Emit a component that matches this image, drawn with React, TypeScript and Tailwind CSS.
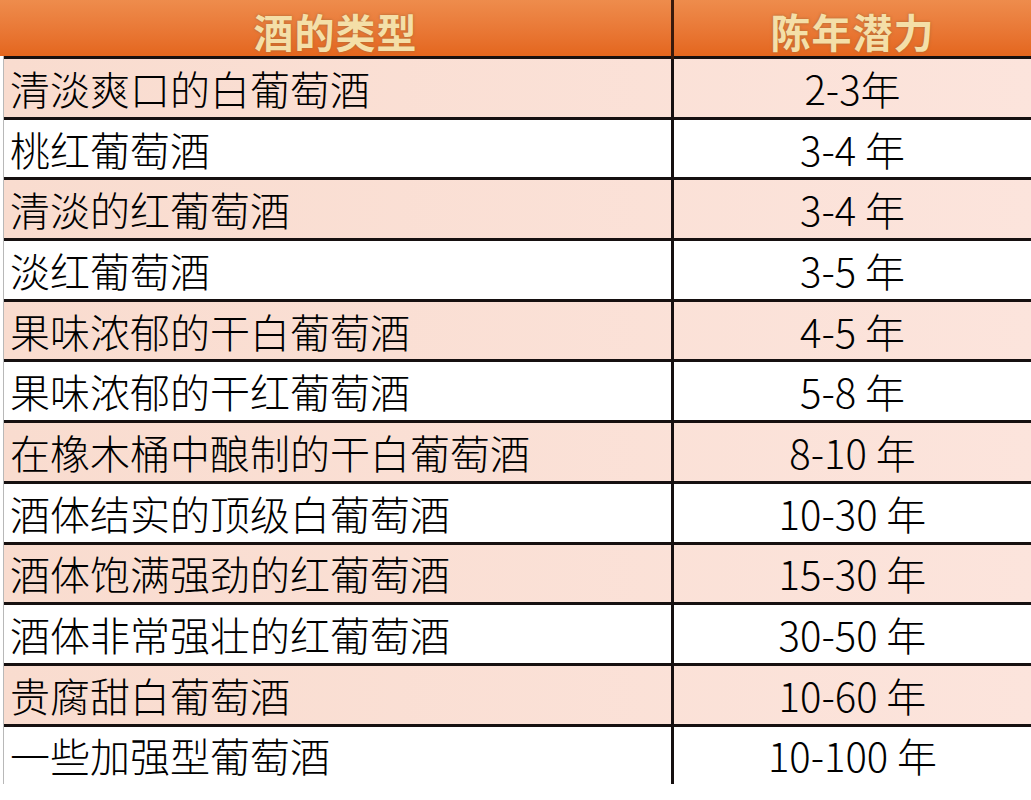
import React from "react";

const rows: [string, string][] = [
    ["清淡爽口的白葡萄酒", "2-3年"],
    ["桃红葡萄酒", "3-4 年"],
    ["清淡的红葡萄酒", "3-4 年"],
    ["淡红葡萄酒", "3-5 年"],
    ["果味浓郁的干白葡萄酒", "4-5 年"],
    ["果味浓郁的干红葡萄酒", "5-8 年"],
    ["在橡木桶中酿制的干白葡萄酒", "8-10 年"],
    ["酒体结实的顶级白葡萄酒", "10-30 年"],
    ["酒体饱满强劲的红葡萄酒", "15-30 年"],
    ["酒体非常强壮的红葡萄酒", "30-50 年"],
    ["贵腐甜白葡萄酒", "10-60 年"],
    ["一些加强型葡萄酒", "10-100 年"],
];

const font = { fontFamily: '"Noto Sans CJK SC", "Liberation Sans", sans-serif' };

export default function App() {
    return (
        <div className="w-[1031px] h-[800px] bg-white overflow-hidden text-black" style={font}>
            {/* header */}
            <div className="grid grid-cols-[671px_1fr] h-[56px] bg-gradient-to-b from-[#ee8c4c] to-[#e4661d]">
                <div className="flex items-center justify-center text-[40px] font-bold text-[#f4dfa8] [text-shadow:0_0_3px_#a86a36] tracking-[1px] pt-[1px]">
                    酒的类型
                </div>
                <div className="flex items-center justify-center border-l-[3px] border-[#3a1a0c] text-[40px] font-bold text-[#f4dfa8] [text-shadow:0_0_3px_#a86a36] tracking-[1px] pt-[1px]">
                    陈年潜力
                </div>
            </div>

            {/* body */}
            <div className="ml-[3px] border-l border-[#b8b8b8]">
                {rows.map(([kind, years], i) => (
                    <div
                        key={kind}
                        className={
                            "grid grid-cols-[667px_1fr] h-[60.7px] box-border border-t-[3px] border-[#161010] " +
                            (i % 2 === 0 ? "bg-gradient-to-r from-[#f9dccf] to-[#fce4dc]" : "bg-white")
                        }
                    >
                        <div className="flex items-center pl-[6px] text-[40px] font-light leading-none whitespace-nowrap">
                            {kind}
                        </div>
                        <div className="flex items-center justify-center border-l-[3px] border-[#161010] text-[40px] font-light leading-none whitespace-nowrap">
                            {years}
                        </div>
                    </div>
                ))}
            </div>
        </div>
    );
}
